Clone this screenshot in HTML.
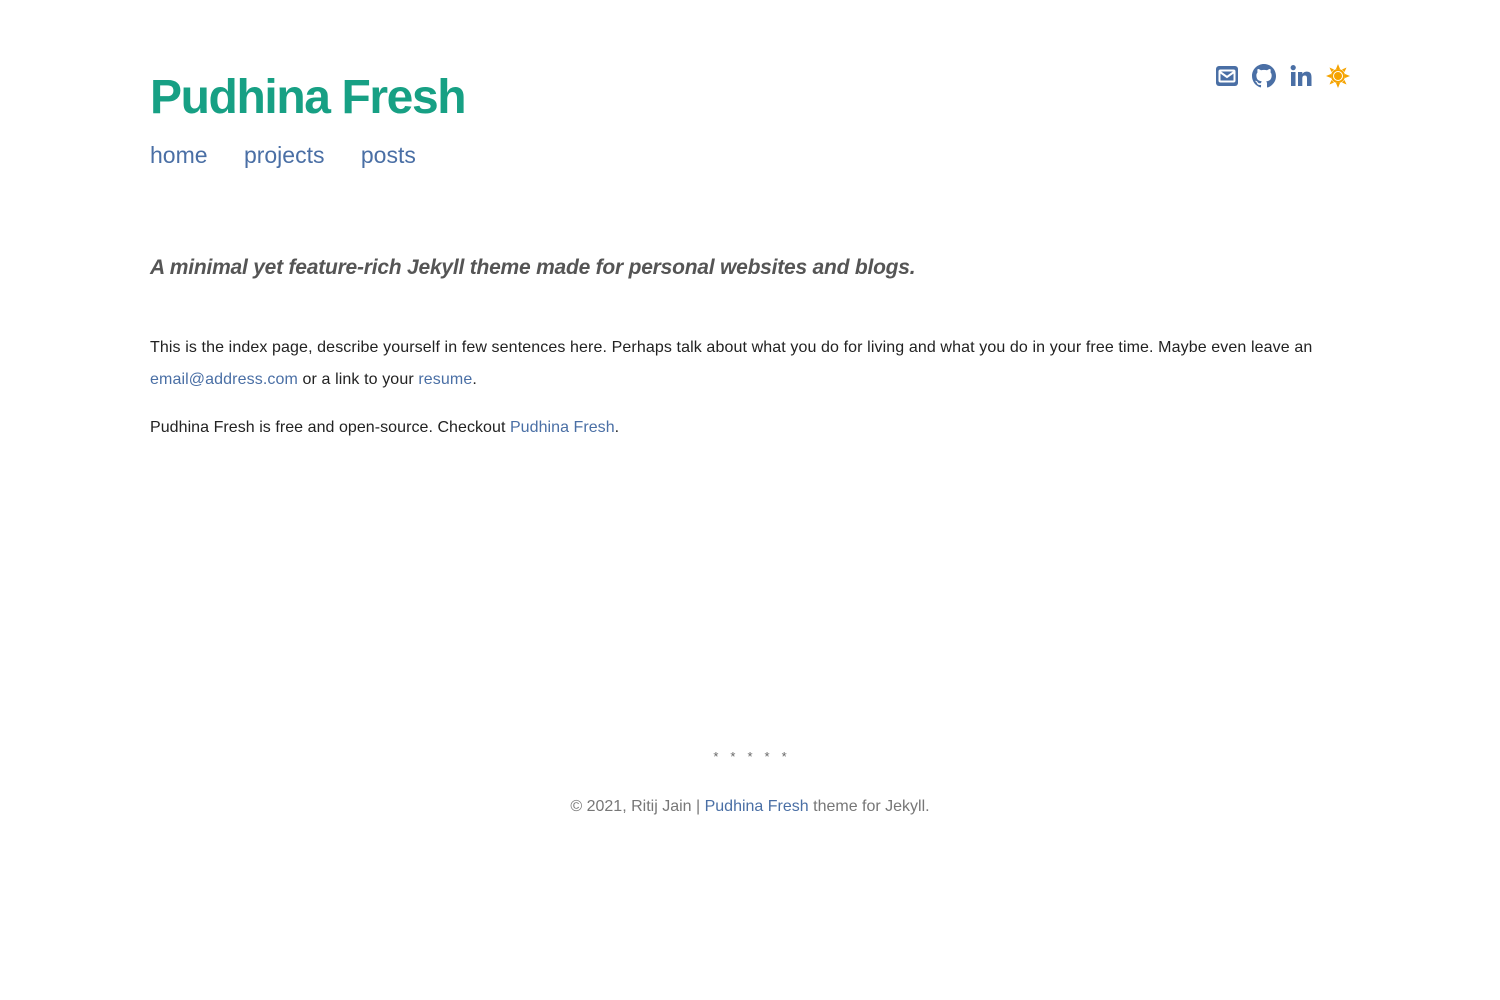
<!DOCTYPE html>
<html><head><meta charset="utf-8"><style>
body{margin:0;background:#fff;font-family:"Liberation Sans",sans-serif;color:#222;}
.wrap{position:relative;width:1200px;margin:0 auto;}
h1{position:absolute;left:0;top:68px;margin:0;font-size:48px;font-weight:bold;color:#17a084;letter-spacing:-1.4px;line-height:60px;}
.nav{position:absolute;left:0;top:140px;font-size:23px;line-height:30px;}
.nav a{color:#4a6fa5;text-decoration:none;margin-right:30px;}
a{color:#4a6fa5;text-decoration:none;}
.icons{position:absolute;right:0;top:64px;display:flex;gap:13px;}
.tag{position:absolute;left:0;top:256px;font-size:21px;font-style:italic;font-weight:bold;color:#555;letter-spacing:-0.22px;}
.p1{position:absolute;left:0;top:332px;font-size:16px;line-height:32px;width:1200px;letter-spacing:0.11px;}
.p2{position:absolute;left:0;top:412px;font-size:16px;line-height:32px;letter-spacing:0.05px;}
.stars{position:absolute;left:0;width:1200px;top:749px;text-align:center;color:#666;font-size:13px;letter-spacing:12px;padding-left:12px;box-sizing:border-box;}
.foot{position:absolute;left:0;width:1200px;top:798px;text-align:center;color:#777;font-size:16px;}
</style></head><body><div class="wrap">
<h1>Pudhina Fresh</h1>
<div class="nav"><a>home</a> <a>projects</a> <a>posts</a></div>
<div class="icons">
<svg width="24" height="24" viewBox="0 0 24 24"><rect x="1" y="2" width="22" height="20" rx="3" fill="#4a6fa5"/><rect x="4.5" y="6.5" width="15" height="11" rx="1" fill="none" stroke="#fff" stroke-width="2"/><path d="M5 8 L12 13 L19 8" stroke="#fff" stroke-width="2" fill="none"/></svg>
<svg width="24" height="24" viewBox="0 0 16 16"><path fill="#4a6fa5" d="M8 0C3.58 0 0 3.58 0 8c0 3.540 2.29 6.53 5.47 7.59.4.07.55-.17.55-.38v-1.33c-2.23.48-2.7-1.07-2.7-1.07-.36-.93-.89-1.17-.89-1.170-.73-.5.05-.49.05-.49.8.06 1.23.83 1.23.83.71 1.23 1.870.87 2.33.66.07-.52.28-.87.51-1.07-1.78-.2-3.64-.89-3.64-3.95 0-.87.31-1.59.82-2.15-.08-.2-.36-1.020.08-2.12 0 0 .67-.21 2.2.82.64-.18 1.32-.27 2-.27.68 0 1.36.09 2 .27 1.53-1.04 2.2-.82 2.2-.82.44 1.1.16 1.92.08 2.12.51.56.82 1.27.82 2.15 0 3.07-1.87 3.75-3.65 3.95.29.25.54.73.54 1.48v2.2c0 .21.15.46.55.38A8.013 8.013 0 0016 8c0-4.42-3.58-8-8-8z"/></svg>
<svg width="24" height="24" viewBox="0 0 24 24"><rect x="2" y="8" width="4.5" height="14" fill="#4a6fa5"/><circle cx="4.2" cy="3.6" r="2.6" fill="#4a6fa5"/><path fill="#4a6fa5" d="M9 8h4.3v2c.7-1.3 2.3-2.4 4.5-2.4 4 0 4.7 2.6 4.7 6V22H18v-7c0-1.7 0-3.5-2.2-3.5s-2.5 1.6-2.5 3.4V22H9z"/></svg>
<svg width="24" height="24" viewBox="0 0 24 24"><g fill="#f5a300"><circle cx="12" cy="12" r="7"/><polygon points="12,0 14,5 10,5"/><polygon points="12,24 14,19 10,19"/><polygon points="0,12 5,10 5,14"/><polygon points="24,12 19,10 19,14"/><polygon points="3.5,3.5 8,5.5 5.5,8"/><polygon points="20.5,3.5 16,5.5 18.5,8"/><polygon points="3.5,20.5 8,18.5 5.5,16"/><polygon points="20.5,20.5 16,18.5 18.5,16"/></g><circle cx="12" cy="12" r="5" fill="#fff"/><circle cx="12" cy="12" r="4" fill="#f5a300"/></svg>
</div>
<div class="tag">A minimal yet feature-rich Jekyll theme made for personal websites and blogs.</div>
<div class="p1">This is the index page, describe yourself in few sentences here. Perhaps talk about what you do for living and what you do in your free time. Maybe even leave an <a>email@address.com</a> or a link to your <a>resume</a>.</div>
<div class="p2">Pudhina Fresh is free and open-source. Checkout <a>Pudhina Fresh</a>.</div>
<div class="stars">*****</div>
<div class="foot">© 2021, Ritij Jain | <a>Pudhina Fresh</a> theme for Jekyll.</div>
</div></body></html>
